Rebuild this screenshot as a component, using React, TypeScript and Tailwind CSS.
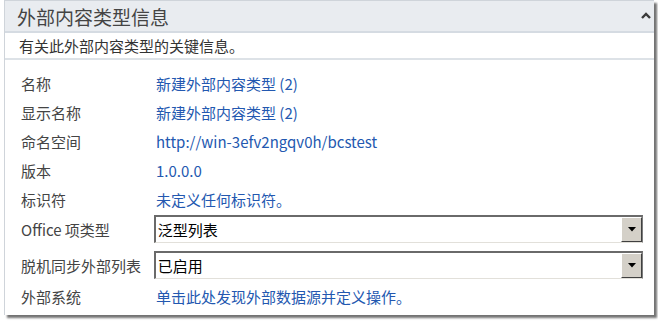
import React from "react";

type Row = { label: string; value: string };

const infoRows: Row[] = [
  { label: "名称", value: "新建外部内容类型 (2)" },
  { label: "显示名称", value: "新建外部内容类型 (2)" },
  { label: "命名空间", value: "http://win-3efv2ngqv0h/bcstest" },
  { label: "版本", value: "1.0.0.0" },
  { label: "标识符", value: "未定义任何标识符。" },
];

const font = { fontFamily: '"Noto Sans CJK SC", "Noto Sans", sans-serif' };

function ClassicSelect({ value }: { value: string }) {
  return (
    <div className="flex h-[28px] w-[490px] border-t-2 border-l-2 border-r border-b border-t-[#6a6a6a] border-l-[#6a6a6a] border-r-[#7c7c7c] border-b-[#e2e0da] bg-white">
      <div className="flex flex-1 items-center pl-[2px] text-[15px] leading-none text-black">
        {value}
      </div>
      <div className="flex w-[21px] items-center justify-center border-t border-l border-r border-b border-t-white border-l-white border-r-[#404040] border-b-[#404040] bg-[#d4d0c8]">
        <svg width="8" height="5" viewBox="0 0 8 5">
          <polygon points="0,0 8,0 4,4.5" fill="#000" />
        </svg>
      </div>
    </div>
  );
}

export default function App() {
  return (
    <div className="h-[322px] w-[658px] bg-white" style={font}>
      <div className="ml-[4px] w-[650px] border-t border-l border-[#cfd4da] bg-white shadow-[3px_3px_2px_rgba(0,0,0,0.55)]">
        {/* header */}
        <div className="flex h-[32px] items-center justify-between border-b-2 border-[#d5dbe2] bg-[#e9ecf0] pl-[12px] pr-[3px]">
          <span className="text-[19px] leading-none text-[#444]">外部内容类型信息</span>
          <svg width="10" height="7" viewBox="0 0 10 7" className="mb-[2px]">
            <polyline points="1,6 5,2 9,6" fill="none" stroke="#3a3a3a" strokeWidth="2.4" />
          </svg>
        </div>

        {/* description */}
        <div className="flex h-[27px] items-center border-b-2 border-[#dde2e7] pl-[14px] text-[15px] leading-none text-[#333]">
          有关此外部内容类型的关键信息。
        </div>

        {/* properties */}
        <div className="pt-[9px] pb-[9px] pl-[16px] pr-[11px] text-[15px] leading-none">
          {infoRows.map((r) => (
            <div key={r.label} className="flex h-[29px] items-center">
              <div className="w-[133px] text-[#444]">{r.label}</div>
              <div className="pl-[2px] text-[#2358b0]">{r.value}</div>
            </div>
          ))}

          <div className="flex h-[36px] items-start pt-[1px]">
            <div className="flex h-[28px] w-[133px] items-center text-[#444]">Office 项类型</div>
            <ClassicSelect value="泛型列表" />
          </div>

          <div className="flex h-[36px] items-start pt-[1px]">
            <div className="flex h-[28px] w-[133px] items-center text-[#444]">脱机同步外部列表</div>
            <ClassicSelect value="已启用" />
          </div>

          <div className="flex h-[20px] items-center">
            <div className="w-[133px] text-[#444]">外部系统</div>
            <div className="pl-[2px] text-[#2358b0]">单击此处发现外部数据源并定义操作。</div>
          </div>
        </div>
      </div>
    </div>
  );
}
